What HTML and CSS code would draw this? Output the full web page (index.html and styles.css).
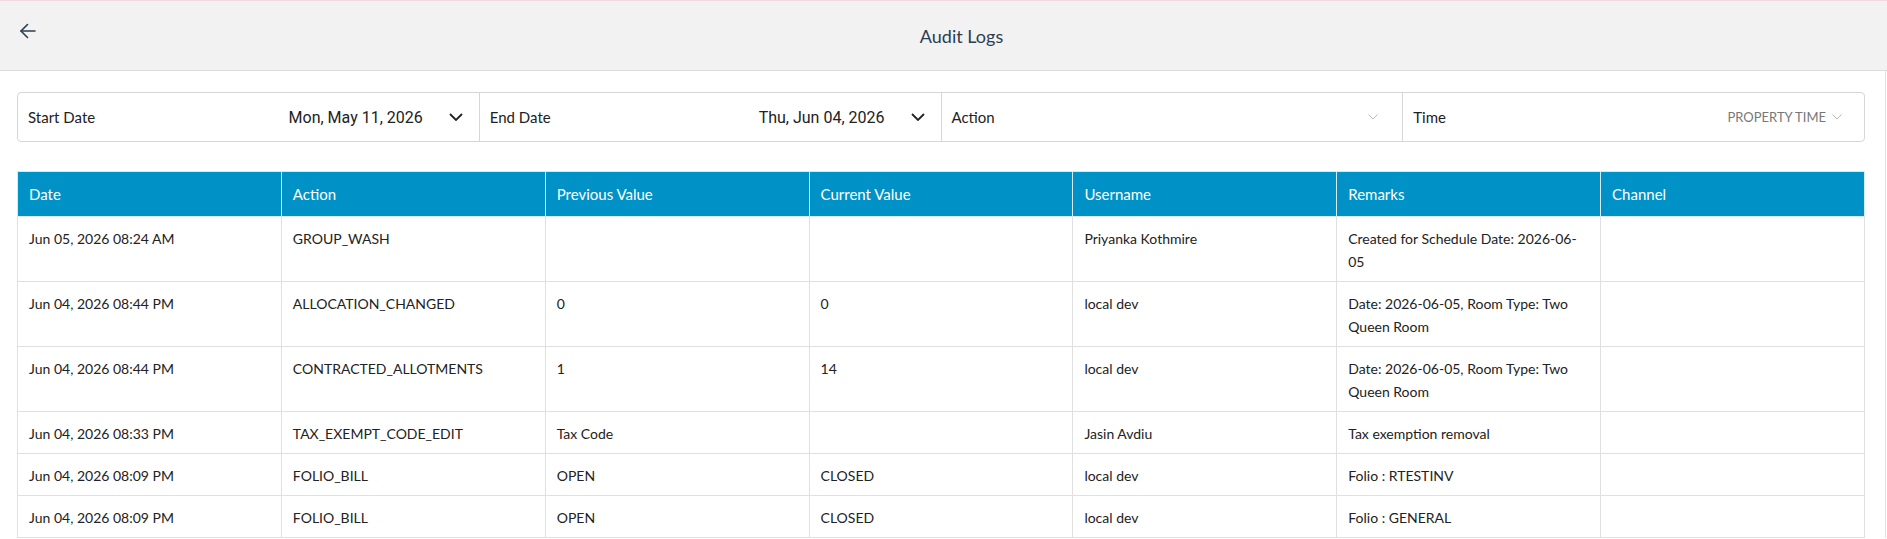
FILE: index.html
```html
<!DOCTYPE html>
<html lang="en">
<head>
    <meta charset="UTF-8">
    <meta name="viewport" content="width=device-width, initial-scale=1.0">
    <title>Audit Logs</title>
    <link rel="stylesheet" href="styles.css">
</head>
<body>
    <header class="topbar">
        <button class="back-button" aria-label="Back">
            <svg width="16" height="16" viewBox="0 0 16 16" fill="none" stroke="#2c3e50" stroke-width="1.6" stroke-linecap="round" stroke-linejoin="round">
                <path d="M15 8H1"/>
                <path d="M7.5 1.5L1 8l6.5 6.5"/>
            </svg>
        </button>
        <h1 class="page-title">Audit Logs</h1>
    </header>

    <main class="content">
        <div class="filters">
            <div class="filter">
                <span class="filter-label">Start Date</span>
                <span class="filter-date">Mon, May 11, 2026</span>
                <svg class="chevron-dark" width="14" height="8" viewBox="0 0 14 8" fill="none" stroke="#222" stroke-width="1.8"><polyline points="1,1 7,7 13,1"/></svg>
            </div>
            <div class="filter">
                <span class="filter-label">End Date</span>
                <span class="filter-date">Thu, Jun 04, 2026</span>
                <svg class="chevron-dark" width="14" height="8" viewBox="0 0 14 8" fill="none" stroke="#222" stroke-width="1.8"><polyline points="1,1 7,7 13,1"/></svg>
            </div>
            <div class="filter">
                <span class="filter-label">Action</span>
                <svg class="chevron-light chevron-action" width="10" height="6" viewBox="0 0 10 6" fill="none" stroke="#b8b8b8" stroke-width="1"><polyline points="0.5,0.5 5,5 9.5,0.5"/></svg>
            </div>
            <div class="filter">
                <span class="filter-label">Time</span>
                <span class="filter-select">PROPERTY TIME</span>
                <svg class="chevron-light" width="10" height="6" viewBox="0 0 10 6" fill="none" stroke="#b8b8b8" stroke-width="1"><polyline points="0.5,0.5 5,5 9.5,0.5"/></svg>
            </div>
        </div>

        <table class="log-table">
            <thead>
                <tr>
                    <th>Date</th>
                    <th>Action</th>
                    <th>Previous Value</th>
                    <th>Current Value</th>
                    <th>Username</th>
                    <th>Remarks</th>
                    <th>Channel</th>
                </tr>
            </thead>
            <tbody>
                <tr>
                    <td>Jun 05, 2026 08:24 AM</td>
                    <td>GROUP_WASH</td>
                    <td></td>
                    <td></td>
                    <td>Priyanka Kothmire</td>
                    <td>Created for Schedule Date: 2026-06-05</td>
                    <td></td>
                </tr>
                <tr>
                    <td>Jun 04, 2026 08:44 PM</td>
                    <td>ALLOCATION_CHANGED</td>
                    <td>0</td>
                    <td>0</td>
                    <td>local dev</td>
                    <td>Date: 2026-06-05, Room Type: Two Queen Room</td>
                    <td></td>
                </tr>
                <tr>
                    <td>Jun 04, 2026 08:44 PM</td>
                    <td>CONTRACTED_ALLOTMENTS</td>
                    <td>1</td>
                    <td>14</td>
                    <td>local dev</td>
                    <td>Date: 2026-06-05, Room Type: Two Queen Room</td>
                    <td></td>
                </tr>
                <tr>
                    <td>Jun 04, 2026 08:33 PM</td>
                    <td>TAX_EXEMPT_CODE_EDIT</td>
                    <td>Tax Code</td>
                    <td></td>
                    <td>Jasin Avdiu</td>
                    <td>Tax exemption removal</td>
                    <td></td>
                </tr>
                <tr>
                    <td>Jun 04, 2026 08:09 PM</td>
                    <td>FOLIO_BILL</td>
                    <td>OPEN</td>
                    <td>CLOSED</td>
                    <td>local dev</td>
                    <td>Folio : RTESTINV</td>
                    <td></td>
                </tr>
                <tr>
                    <td>Jun 04, 2026 08:09 PM</td>
                    <td>FOLIO_BILL</td>
                    <td>OPEN</td>
                    <td>CLOSED</td>
                    <td>local dev</td>
                    <td>Folio : GENERAL</td>
                    <td></td>
                </tr>
            </tbody>
        </table>
    </main>
</body>
</html>
```

FILE: styles.css
```css
body {
    margin: 0;
    font-family: Lato, 'Noto Sans', sans-serif;
    color: #222;
    background: #fff;
}

/* header */
.topbar {
    display: flex;
    align-items: center;
    height: 69px;
    background: #f2f2f2;
    border-top: 1px solid #f2d9df;
    border-bottom: 1px solid #dcdcdc;
}

.back-button {
    display: flex;
    align-self: flex-start;
    width: 36px;
    margin-top: 22px;
    padding: 0 0 0 20px;
    background: none;
    border: none;
    cursor: pointer;
}

.page-title {
    flex: 1;
    margin: 0;
    text-align: center;
    font-size: 18px;
    font-weight: 400;
    color: #2c3e50;
}

.content {
    padding: 21px 20px 0 17px;
    margin-right: 1px;
    border-right: 1px solid #e2e2e2;
}

/* filter bar */
.filters {
    display: flex;
    height: 48px;
    border: 1px solid #d6d6d6;
    border-radius: 4px;
}

.filter {
    flex: 1;
    display: flex;
    align-items: center;
    padding: 0 16px 0 10px;
    border-left: 1px solid #d6d6d6;
}

.filter:first-child {
    border-left: none;
}

.filter-label {
    flex: 1;
    font-size: 15px;
    color: #222;
}

.filter-date {
    font-family: Roboto, 'Liberation Sans', sans-serif;
    font-size: 16px;
    color: #222;
}

.chevron-dark {
    margin-left: 26px;
}

.filter-select {
    font-size: 13px;
    color: #777;
}

.chevron-light {
    margin-left: 6px;
    margin-right: 6px;
}

.chevron-action {
    margin-right: 8px;
}

/* table */
.log-table {
    width: 100%;
    margin-top: 29px;
    border-collapse: collapse;
    table-layout: fixed;
    font-size: 14px;
}

.log-table th {
    background: #0091c6;
    color: #fff;
    font-size: 15px;
    font-weight: 400;
    text-align: left;
    line-height: 22px;
    padding: 11px 11px;
    border: 1px solid #d8e9f0;
}

.log-table td {
    vertical-align: top;
    line-height: 23px;
    padding: 10px 11px 8px;
    border: 1px solid #e0e0e0;
}
```
